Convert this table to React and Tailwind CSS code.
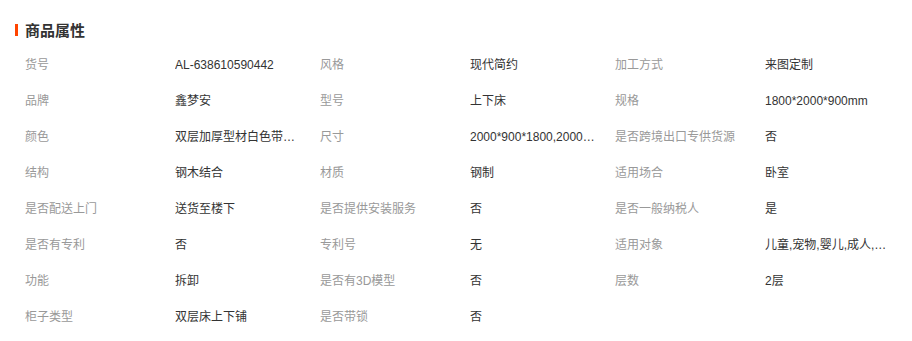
import React from "react";

const rows = [
  [["货号", "AL-638610590442"], ["风格", "现代简约"], ["加工方式", "来图定制"]],
  [["品牌", "鑫梦安"], ["型号", "上下床"], ["规格", "1800*2000*900mm"]],
  [["颜色", "双层加厚型材白色带梯柜"], ["尺寸", "2000*900*1800,2000*1000*1800"], ["是否跨境出口专供货源", "否"]],
  [["结构", "钢木结合"], ["材质", "钢制"], ["适用场合", "卧室"]],
  [["是否配送上门", "送货至楼下"], ["是否提供安装服务", "否"], ["是否一般纳税人", "是"]],
  [["是否有专利", "否"], ["专利号", "无"], ["适用对象", "儿童,宠物,婴儿,成人,青少年"]],
  [["功能", "拆卸"], ["是否有3D模型", "否"], ["层数", "2层"]],
  [["柜子类型", "双层床上下铺"], ["是否带锁", "否"]],
];

const Attr = ({ label, value }) => (
  <div className="flex items-center w-[295px] shrink-0">
    <span className="w-[150px] shrink-0 text-[#999] whitespace-nowrap">{label}</span>
    <span className="w-[128px] text-[#333] truncate">{value}</span>
  </div>
);

export default function App() {
  return (
    <div
      className="w-[912px] h-[341px] bg-white pt-[21px] text-[12px]"
      style={{ fontFamily: '"Liberation Sans", "Noto Sans CJK SC", sans-serif' }}
    >
      <div className="flex items-center h-[18px] pl-[15px]">
        <span className="w-[3px] h-[12px] bg-[#ff4400]" />
        <h3 className="ml-[7px] text-[15px] font-bold text-[#333] leading-none">商品属性</h3>
      </div>
      <div className="mt-[8px] pl-[25px]">
        {rows.map((row, i) => (
          <div key={i} className="flex h-[36px]">
            {row.map(([label, value]) => (
              <Attr key={label} label={label} value={value} />
            ))}
          </div>
        ))}
      </div>
    </div>
  );
}
